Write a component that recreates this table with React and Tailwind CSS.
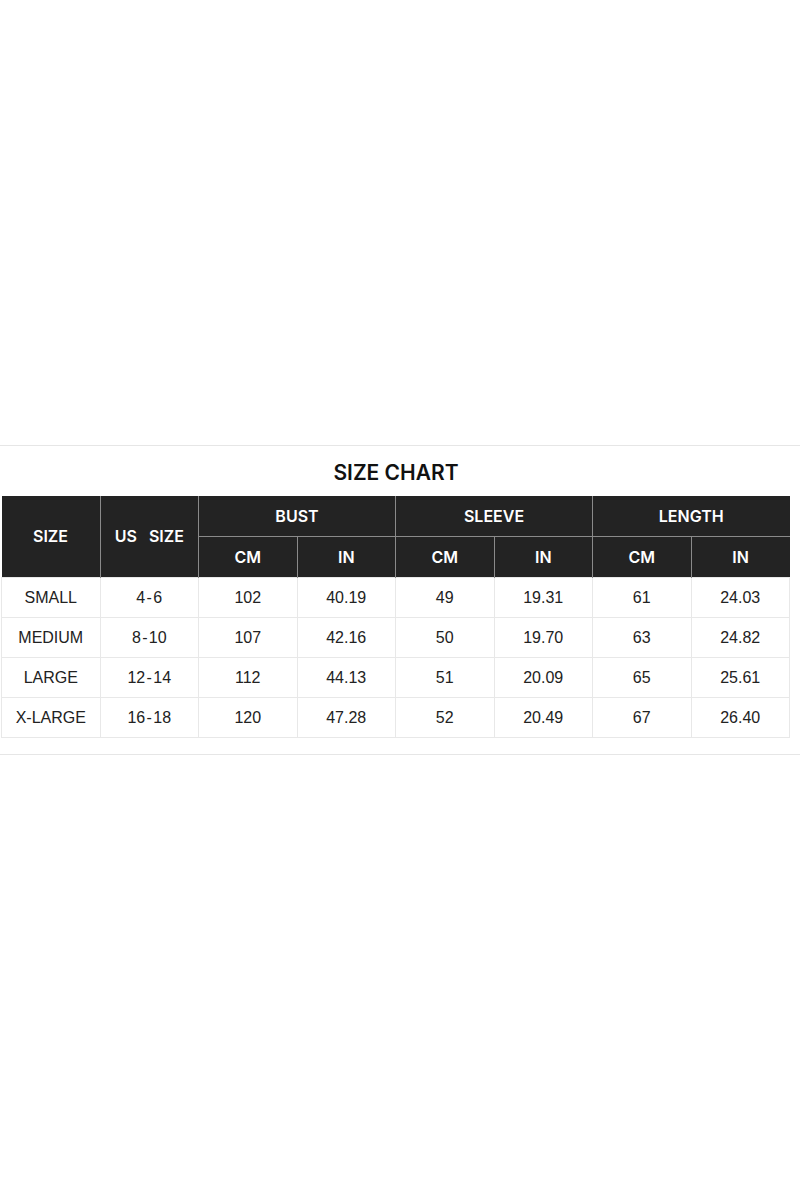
import React from 'react';

const rows = [
  ['SMALL', '4\u200a-\u200a6', '102', '40.19', '49', '19.31', '61', '24.03'],
  ['MEDIUM', '8\u200a-\u200a10', '107', '42.16', '50', '19.70', '63', '24.82'],
  ['LARGE', '12\u200a-\u200a14', '112', '44.13', '51', '20.09', '65', '25.61'],
  ['X-LARGE', '16\u200a-\u200a18', '120', '47.28', '52', '20.49', '67', '26.40'],
];

export default function App() {
  return (
    <div className="w-[800px] h-[1200px] bg-white flex flex-col">
      <div className="h-[445px]" />
      <div className="border-t border-[#e6e6e6] pb-4">
        {/* title */}
        <h1 className="w-[792px] h-[50px] flex items-center justify-center pt-[3px] text-[21px] font-semibold text-[#111] font-['Inter',sans-serif]">
          SIZE CHART
        </h1>
        {/* chart */}
        <table className="ml-px w-[789px] table-fixed border-collapse text-center">
          <thead className="bg-[#232323] text-white font-['Inter',sans-serif] font-semibold text-[16px]">
            <tr className="h-[40px]">
              <th rowSpan={2} className="border-r border-[#8a8a8a] font-semibold">SIZE</th>
              <th rowSpan={2} className="border-r border-[#8a8a8a] font-semibold whitespace-pre">US   SIZE</th>
              <th colSpan={2} className="border-r border-b border-[#8a8a8a] font-semibold">BUST</th>
              <th colSpan={2} className="border-r border-b border-[#8a8a8a] font-semibold">SLEEVE</th>
              <th colSpan={2} className="border-b border-[#8a8a8a] font-semibold">LENGTH</th>
            </tr>
            <tr className="h-[41px]">
              <th className="border-r border-[#8a8a8a] font-semibold">CM</th>
              <th className="border-r border-[#8a8a8a] font-semibold">IN</th>
              <th className="border-r border-[#8a8a8a] font-semibold">CM</th>
              <th className="border-r border-[#8a8a8a] font-semibold">IN</th>
              <th className="border-r border-[#8a8a8a] font-semibold">CM</th>
              <th className="font-semibold">IN</th>
            </tr>
          </thead>
          <tbody className="text-[16px] text-[#222] font-['Liberation_Sans',Arial,sans-serif]">
            {rows.map((r) => (
              <tr key={r[0]} className="h-[40px]">
                {r.map((c, i) => (
                  <td key={i} className="border border-[#e8e8e8] pt-px">
                    {c}
                  </td>
                ))}
              </tr>
            ))}
          </tbody>
        </table>
      </div>
      <div className="border-t border-[#e6e6e6]" />
    </div>
  );
}
